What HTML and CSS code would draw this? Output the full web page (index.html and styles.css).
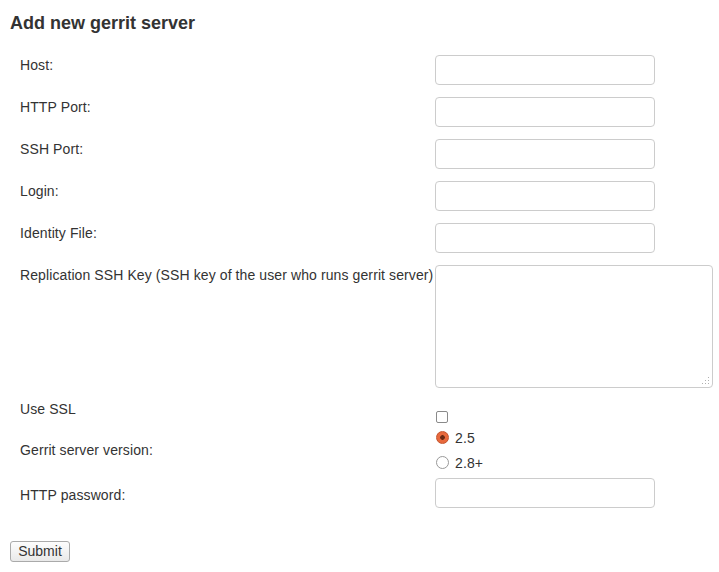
FILE: index.html
```html
<!DOCTYPE html>
<html>
<head>
<meta charset="utf-8">
<link rel="stylesheet" href="styles.css">
</head>
<body>
<h2 class="title">Add new gerrit server</h2>
<form class="form">
  <div class="row"><label class="lbl">Host:</label><div><input class="txt" type="text"></div></div>
  <div class="row"><label class="lbl">HTTP Port:</label><div><input class="txt" type="text"></div></div>
  <div class="row"><label class="lbl">SSH Port:</label><div><input class="txt" type="text"></div></div>
  <div class="row"><label class="lbl">Login:</label><div><input class="txt" type="text"></div></div>
  <div class="row"><label class="lbl">Identity File:</label><div><input class="txt" type="text"></div></div>
  <div class="row row-ta"><label class="lbl">Replication SSH Key (SSH key of the user who runs gerrit server)</label><div><textarea class="ta"></textarea></div></div>
  <div class="row row-ssl"><label class="lbl">Use SSL</label><div><input class="chk" type="checkbox"></div></div>
  <div class="row row-ver"><label class="lbl lbl-mid">Gerrit server version:</label>
    <div class="radios">
      <label class="opt"><input class="rad" type="radio" name="v" checked><span>2.5</span></label>
      <label class="opt"><input class="rad" type="radio" name="v"><span>2.8+</span></label>
    </div>
  </div>
  <div class="row row-pw"><label class="lbl lbl-pw">HTTP password:</label><div><input class="txt" type="password"></div></div>
  <div class="actions"><button class="btn" type="button">Submit</button></div>
</form>
</body>
</html>
```
FILE: styles.css
```css
html, body {
  margin: 0;
  padding: 0;
  background: #fff;
}
body {
  font-family: "Liberation Sans", Arial, sans-serif;
  font-size: 14px;
  color: #333;
  letter-spacing: 0.1px;
}
.title {
  margin: 13px 0 0 10px;
  font-size: 18px;
  line-height: 20px;
  font-weight: bold;
  color: #333;
  letter-spacing: 0;
}
.form {
  margin-top: 22px;
}
.row {
  display: grid;
  grid-template-columns: 415px auto;
  padding-left: 20px;
  margin-bottom: 12px;
}
.lbl {
  line-height: 20px;
  color: #333;
}
.txt {
  box-sizing: border-box;
  display: block;
  width: 220px;
  height: 30px;
  margin: 0;
  border: 1px solid #ccc;
  border-radius: 4px;
  background: #fff;
  font: 14px "Liberation Sans", Arial, sans-serif;
  padding: 4px 6px;
  outline: none;
}
.ta {
  box-sizing: border-box;
  display: block;
  width: 278px;
  height: 123px;
  margin: 0;
  border: 1px solid #ccc;
  border-radius: 4px;
  resize: none;
  outline: none;
  background-color: #fff;
  background-image: url("data:image/svg+xml,%3Csvg xmlns='http://www.w3.org/2000/svg' width='9' height='9'%3E%3Cg fill='%23b0b0b0'%3E%3Crect x='7' y='1' width='1' height='1'/%3E%3Crect x='4' y='4' width='1' height='1'/%3E%3Crect x='7' y='4' width='1' height='1'/%3E%3Crect x='1' y='7' width='1' height='1'/%3E%3Crect x='4' y='7' width='1' height='1'/%3E%3Crect x='7' y='7' width='1' height='1'/%3E%3C/g%3E%3C/svg%3E");
  background-repeat: no-repeat;
  background-position: right 2px bottom 2px;
}
.row-ta {
  margin-bottom: 11px;
}
.row-ssl {
  margin-bottom: 2px;
}
.chk {
  appearance: none;
  -webkit-appearance: none;
  display: block;
  box-sizing: border-box;
  width: 12px;
  height: 12px;
  margin: 12px 0 0 1px;
  border: 1px solid #8a8a8a;
  border-radius: 2px;
  background: #fff;
}
.row-ver {
  margin-bottom: 3px;
}
.lbl-mid {
  align-self: center;
}
.radios {
  display: flex;
  flex-direction: column;
}
.opt {
  display: flex;
  align-items: center;
  height: 25px;
  gap: 6px;
  color: #333;
}
.rad {
  appearance: none;
  -webkit-appearance: none;
  box-sizing: border-box;
  width: 13px;
  height: 13px;
  margin: 0 0 0 1px;
  border: 1px solid #999;
  border-radius: 50%;
  background: #fff;
}
.rad:checked {
  border-color: #c4532c;
  background: radial-gradient(circle, #6b2a14 0 2px, #e8693d 2.6px);
}
.row-pw {
  margin-bottom: 33px;
}
.lbl-pw {
  padding-top: 7px;
}
.actions {
  padding-left: 10px;
}
.btn {
  box-sizing: border-box;
  height: 21px;
  width: 60px;
  padding: 0;
  margin: 0;
  border: 1px solid #aaa;
  border-radius: 3px;
  background: linear-gradient(#fdfdfd, #e9e9e9);
  font: 14px "Liberation Sans", Arial, sans-serif;
  color: #333;
  line-height: 19px;
}
```
